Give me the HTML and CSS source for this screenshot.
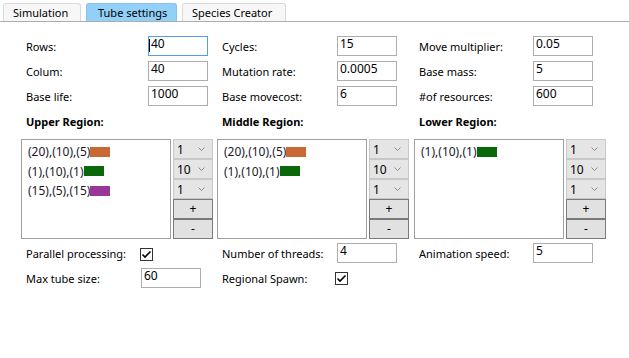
FILE: index.html
```html
<!DOCTYPE html>
<html>
<head>
<meta charset="utf-8">
<link rel="stylesheet" href="styles.css">
</head>
<body>
<div class="tabs">
  <div class="tab tab-sim">Simulation</div>
  <div class="tab tab-tube active">Tube settings</div>
  <div class="tab tab-species">Species Creator</div>
</div>
<div class="page">
  <div class="field"><span class="lbl w122">Rows:</span><span class="caretwrap"><input class="tb focus" value="40"></span></div>
  <div class="field"><span class="lbl w115">Cycles:</span><input class="tb" value="15"></div>
  <div class="field"><span class="lbl w114">Move multiplier:</span><input class="tb" value="0.05"></div>

  <div class="field"><span class="lbl w122">Colum:</span><input class="tb" value="40"></div>
  <div class="field"><span class="lbl w115">Mutation rate:</span><input class="tb" value="0.0005"></div>
  <div class="field"><span class="lbl w114">Base mass:</span><input class="tb" value="5"></div>

  <div class="field"><span class="lbl w122">Base life:</span><input class="tb" value="1000"></div>
  <div class="field"><span class="lbl w115">Base movecost:</span><input class="tb" value="6"></div>
  <div class="field"><span class="lbl w114">#of resources:</span><input class="tb" value="600"></div>

  <div class="heading">Upper Region:</div>
  <div class="heading">Middle Region:</div>
  <div class="heading">Lower Region:</div>

  <div class="region">
    <div class="listbox">
      <div class="item">(20),(10),(5)<span class="sw orange"></span></div>
      <div class="item">(1),(10),(1)<span class="sw green"></span></div>
      <div class="item">(15),(5),(15)<span class="sw purple"></span></div>
    </div>
    <div class="ctrls">
      <div class="combo"><span>1</span><svg class="chev" width="7" height="4" viewBox="0 0 7 4"><polyline points="0.5,0.5 3.5,3.5 6.5,0.5" fill="none" stroke="#8a8a8a" stroke-width="1"/></svg></div>
      <div class="combo"><span>10</span><svg class="chev" width="7" height="4" viewBox="0 0 7 4"><polyline points="0.5,0.5 3.5,3.5 6.5,0.5" fill="none" stroke="#8a8a8a" stroke-width="1"/></svg></div>
      <div class="combo"><span>1</span><svg class="chev" width="7" height="4" viewBox="0 0 7 4"><polyline points="0.5,0.5 3.5,3.5 6.5,0.5" fill="none" stroke="#8a8a8a" stroke-width="1"/></svg></div>
      <button class="btn">+</button>
      <button class="btn">-</button>
    </div>
  </div>
  <div class="region">
    <div class="listbox">
      <div class="item">(20),(10),(5)<span class="sw orange"></span></div>
      <div class="item">(1),(10),(1)<span class="sw green"></span></div>
    </div>
    <div class="ctrls">
      <div class="combo"><span>1</span><svg class="chev" width="7" height="4" viewBox="0 0 7 4"><polyline points="0.5,0.5 3.5,3.5 6.5,0.5" fill="none" stroke="#8a8a8a" stroke-width="1"/></svg></div>
      <div class="combo"><span>10</span><svg class="chev" width="7" height="4" viewBox="0 0 7 4"><polyline points="0.5,0.5 3.5,3.5 6.5,0.5" fill="none" stroke="#8a8a8a" stroke-width="1"/></svg></div>
      <div class="combo"><span>1</span><svg class="chev" width="7" height="4" viewBox="0 0 7 4"><polyline points="0.5,0.5 3.5,3.5 6.5,0.5" fill="none" stroke="#8a8a8a" stroke-width="1"/></svg></div>
      <button class="btn">+</button>
      <button class="btn">-</button>
    </div>
  </div>
  <div class="region">
    <div class="listbox">
      <div class="item">(1),(10),(1)<span class="sw green"></span></div>
    </div>
    <div class="ctrls">
      <div class="combo"><span>1</span><svg class="chev" width="7" height="4" viewBox="0 0 7 4"><polyline points="0.5,0.5 3.5,3.5 6.5,0.5" fill="none" stroke="#8a8a8a" stroke-width="1"/></svg></div>
      <div class="combo"><span>10</span><svg class="chev" width="7" height="4" viewBox="0 0 7 4"><polyline points="0.5,0.5 3.5,3.5 6.5,0.5" fill="none" stroke="#8a8a8a" stroke-width="1"/></svg></div>
      <div class="combo"><span>1</span><svg class="chev" width="7" height="4" viewBox="0 0 7 4"><polyline points="0.5,0.5 3.5,3.5 6.5,0.5" fill="none" stroke="#8a8a8a" stroke-width="1"/></svg></div>
      <button class="btn">+</button>
      <button class="btn">-</button>
    </div>
  </div>

  <div class="field"><span class="lbl w114">Parallel processing:</span><span class="cb cb1"><svg width="11" height="11" viewBox="0 0 11 11"><polyline points="1.5,5.5 4,8 9.5,2.5" fill="none" stroke="#000" stroke-width="1.6"/></svg></span></div>
  <div class="field"><span class="lbl w115">Number of threads:</span><input class="tb" value="4"></div>
  <div class="field"><span class="lbl w114">Animation speed:</span><input class="tb" value="5"></div>

  <div class="field"><span class="lbl w115">Max tube size:</span><input class="tb" value="60"></div>
  <div class="field"><span class="lbl w113">Regional Spawn:</span><span class="cb cb2"><svg width="11" height="11" viewBox="0 0 11 11"><polyline points="1.5,5.5 4,8 9.5,2.5" fill="none" stroke="#000" stroke-width="1.6"/></svg></span></div>
  <div class="field"></div>
</div>
</body>
</html>
```
FILE: styles.css
```css
* { box-sizing: border-box; }
html, body { margin: 0; padding: 0; background: #fff; }
body {
  width: 629px;
  height: 358px;
  overflow: hidden;
  font-family: "Noto Sans", "Open Sans", sans-serif;
  font-size: 11px;
  color: #000;
}

/* tabs */
.tabs {
  display: flex;
  align-items: flex-end;
  gap: 5px;
  height: 22px;
  padding-left: 3px;
  border-bottom: 1px solid #adadad;
}
.tab {
  height: 18px;
  line-height: 17px;
  padding-left: 9px;
  border: 1px solid #d9d9d9;
  border-bottom: none;
  border-radius: 3px 3px 0 0;
  background: #f7f7f7;
  white-space: nowrap;
}
.tab-sim { width: 78px; }
.tab-tube { width: 91px; padding-left: 11px; }
.tab-species { width: 104px; }
.tab.active {
  background: #93d0f8;
  border-color: #86c3ee;
}

/* page grid */
.page {
  display: grid;
  grid-template-columns: 196px 197px 196px;
  grid-template-rows: 20px 20px 20px 23px 99px 20px 20px;
  row-gap: 5px;
  margin: 14px 0 0 21px;
}
.field {
  display: flex;
  align-items: flex-start;
  padding-left: 5px;
}
.lbl {
  flex: none;
  line-height: 20px;
  padding-top: 1px;
  white-space: nowrap;
}
.w122 { width: 122px; }
.w115 { width: 115px; }
.w114 { width: 114px; }
.w113 { width: 113px; }

.tb {
  width: 60px;
  height: 20px;
  margin: 0;
  padding: 0 2px 5px 2px;
  border: 1px solid #abadb3;
  background: #fff;
  font-family: inherit;
  font-size: 12px;
  color: #000;
  outline: none;
}
.tb.focus { border-color: #569de5; }
.caretwrap { position: relative; display: block; }
.caretwrap::after {
  content: "";
  position: absolute;
  left: 1px;
  top: 3px;
  width: 1px;
  height: 13px;
  background: #000;
}

.heading {
  padding-left: 5px;
  font-weight: bold;
  line-height: 22px;
}

/* regions */
.region {
  display: flex;
  gap: 2px;
  height: 100px;
}
.listbox {
  width: 150px;
  height: 100px;
  border: 1px solid #a0a0a0;
  padding: 2px 0 0 6px;
  font-size: 12px;
}
.item {
  display: flex;
  align-items: center;
  height: 19.5px;
  white-space: nowrap;
  color: #1a1a2a;
}
.sw {
  display: inline-block;
  width: 20px;
  height: 10px;
}
.orange { background: #c96a36; }
.green { background: #0a680a; }
.purple { background: #973797; }

.ctrls {
  width: 40px;
  display: flex;
  flex-direction: column;
  font-size: 12px;
}
.combo {
  height: 20px;
  display: flex;
  align-items: center;
  justify-content: space-between;
  padding: 0 7px 0 3px;
  border: 1px solid #c8c8c8;
  background: #e5e5e5;
}
.chev { display: block; }
.btn {
  height: 20px;
  margin: 0;
  padding: 0;
  border: 1px solid #7a7a7a;
  background: #e1e1e1;
  font: inherit;
  color: #000;
  line-height: 16px;
}

.cb {
  display: flex;
  align-items: center;
  justify-content: center;
  width: 13px;
  height: 13px;
  border: 1px solid #333;
  background: #fff;
}
.cb1 { margin-top: 5px; }
.cb2 { margin-top: 4px; }
```
